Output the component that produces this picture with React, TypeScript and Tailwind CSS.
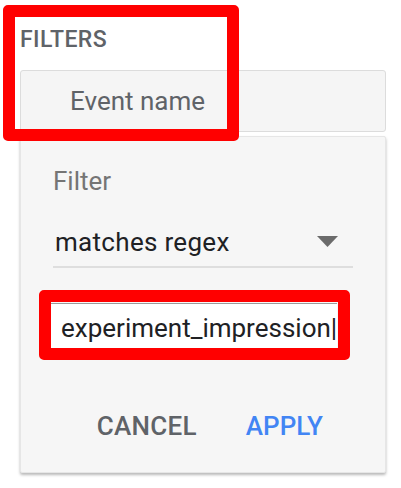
import React from "react";

export default function App() {
  return (
    <div
      className="relative w-[401px] h-[488px] bg-white overflow-hidden"
      style={{ fontFamily: "Roboto, 'Liberation Sans', sans-serif" }}
    >
      <div className="px-[20px] pt-[27px]">
        <div className="text-[23px] leading-[26px] font-medium text-[#5f6368] tracking-[0.4px]">
          FILTERS
        </div>
        <div className="mt-[17px] h-[62px] w-[366px] rounded-[3px] border border-[#dcdcdc] bg-[#f5f5f5] flex items-center pl-[49px]">
          <span className="text-[26px] leading-[30px] text-[#5f6368]">Event name</span>
        </div>
        <div className="mt-[4px] w-[366px] rounded-[2px] bg-[#f6f6f6] border border-[#e6e6e6] shadow-[0_2px_3px_rgba(0,0,0,0.28)] pt-[29px] pb-[31px]">
          <div className="pl-[32px] text-[26px] leading-[30px] text-[#757575]">Filter</div>
          <div className="mt-[31px] ml-[32px] w-[300px] border-b-2 border-[#dedede] pb-[9px] flex items-center justify-between">
            <span className="pl-[2px] text-[26px] leading-[30px] text-[#202124] tracking-[0.3px]">matches regex</span>
            <svg width="21" height="11" viewBox="0 0 21 11" className="mr-[15px] mt-[-2px]">
              <path d="M0 0 L21 0 L10.5 11 Z" fill="#6b6b6b" />
            </svg>
          </div>
          <div className="mt-[35px] ml-[30px] w-[286px] h-[45px] bg-white border-t border-[#9a9a9a] overflow-hidden whitespace-nowrap flex items-center pl-[10px]">
            <span className="text-[26px] leading-[30px] text-[#202124] mt-[3px]">experiment_impression|</span>
          </div>
          <div className="mt-[63px] flex justify-end items-center gap-[49px] pr-[62px]">
            <span className="text-[26px] leading-[30px] font-medium text-[#5f6368] tracking-[0.3px]">CANCEL</span>
            <span className="text-[26px] leading-[30px] font-medium text-[#4285f4]">APPLY</span>
          </div>
        </div>
      </div>

      <div className="absolute left-[3px] top-[5px] w-[236px] h-[136px] border-[12px] border-[#ff0000] rounded-[5px]" />
      <div className="absolute left-[39px] top-[290px] w-[311px] h-[70px] border-[12px] border-[#ff0000] rounded-[5px]" />
    </div>
  );
}
